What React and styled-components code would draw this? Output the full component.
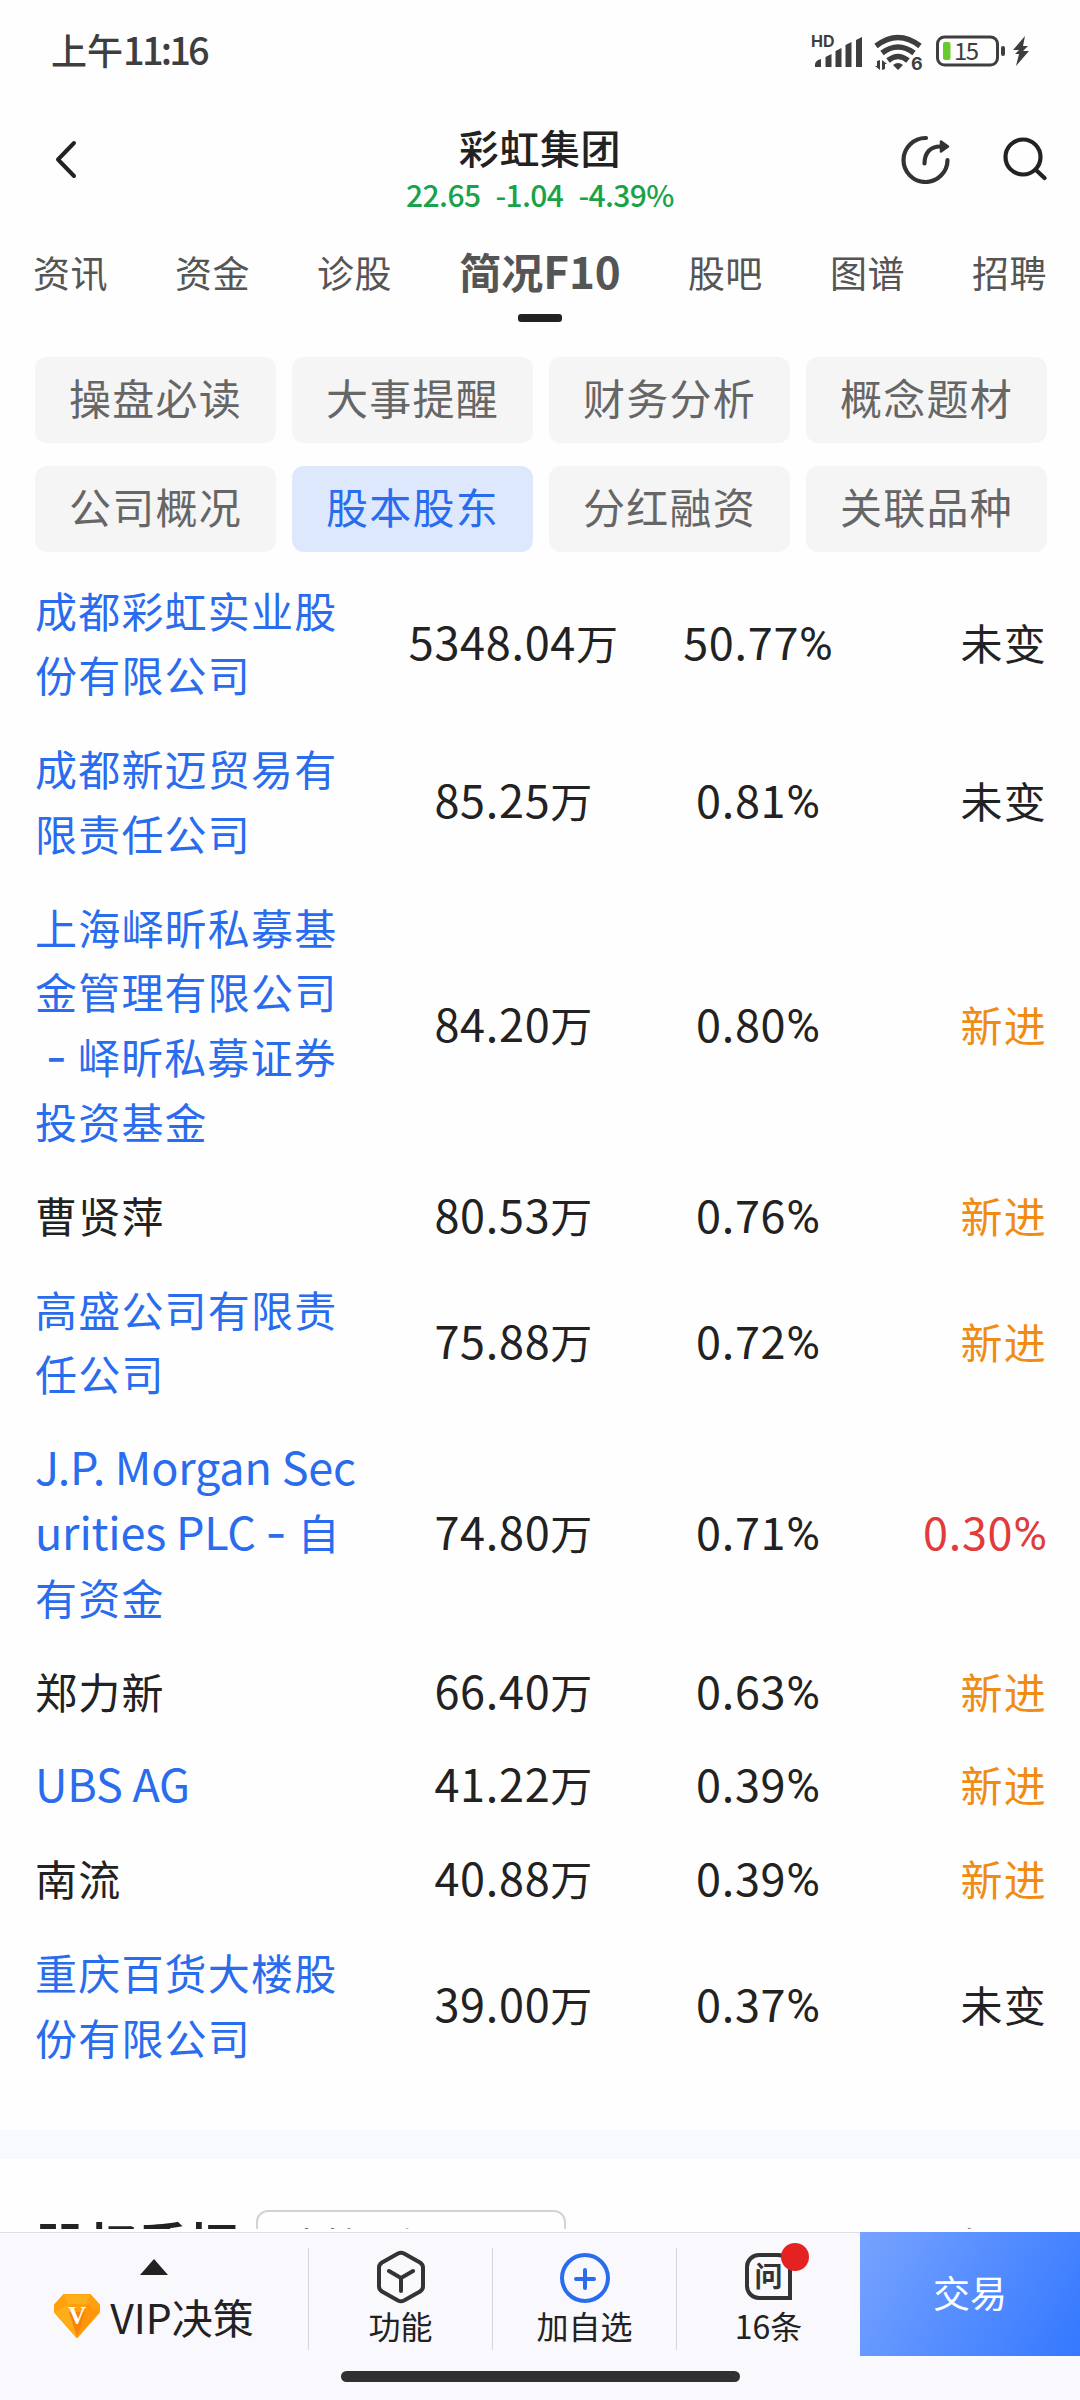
import React from "react";
import styled, { createGlobalStyle, css } from "styled-components";

const GlobalStyle = createGlobalStyle`
    * {
        box-sizing: border-box;
    }
    body {
        margin: 0;
        background: #fefefe;
        font-family: "Noto Sans CJK SC", sans-serif;
        color: #222222;
    }
`;

const Page = styled.div`
    width: 1080px;
    height: 2400px;
    display: flex;
    flex-direction: column;
    overflow: hidden;
    background: #fefefe;
`;

const StatusBar = styled.div`
    height: 104px;
    flex: none;
    display: flex;
    align-items: flex-start;
    justify-content: space-between;
    padding: 24px 48px 0 51px;
    color: #3e3e3e;
`;

const Clock = styled.div`
    font-size: 36px;
    font-weight: 500;
    line-height: 50px;

    span {
        font-size: 38px;
        line-height: 1;
        letter-spacing: -2.8px;
    }
`;

const StatusIcons = styled.svg`
    width: 222px;
    height: 50px;
    display: block;
    margin-top: 2px;
`;

const Header = styled.header`
    height: 120px;
    flex: none;
    display: flex;
    align-items: flex-start;
    justify-content: space-between;
    padding: 22px 33px 0 52px;
`;

const HeaderSide = styled.div`
    width: ${(props) => (props.$right ? 150 : 131)}px;
    display: flex;
    gap: 51px;
    justify-content: ${(props) => (props.$right ? "flex-end" : "flex-start")};

    svg {
        display: block;
        flex: none;
        margin-top: 8px;
    }
`;

const Title = styled.div`
    text-align: center;
    font-size: 40px;
    font-weight: 500;
    line-height: 42px;
    letter-spacing: 0.6px;
`;

const Quote = styled.div`
    display: flex;
    gap: 15px;
    margin-top: 8px;
    font-size: 30px;
    font-weight: 500;
    line-height: 36px;
    letter-spacing: -0.6px;
    color: #19a348;
`;

const Tabs = styled.nav`
    height: 133px;
    flex: none;
    display: flex;
    justify-content: space-between;
    padding: 18px 33px 0;
`;

const Tab = styled.div`
    display: flex;
    flex-direction: column;
    align-items: center;
    font-size: 37px;
    line-height: 60px;
    letter-spacing: 0.5px;
    color: #555555;

    ${(props) =>
        props.$active &&
        css`
            font-size: 42px;
            font-weight: 700;
            line-height: 58px;
            letter-spacing: 0;

            span {
                font-size: 44px;
                line-height: 1;
            }

            &::after {
                content: "";
                width: 44px;
                height: 8px;
                margin-top: 14px;
                border-radius: 3px;
                background: #222222;
            }
        `}
`;

const ChipGrid = styled.div`
    flex: none;
    display: grid;
    grid-template-columns: repeat(4, 1fr);
    gap: 23px 16px;
    padding: 0 33px 0 35px;
`;

const Chip = styled.div`
    height: 86px;
    border-radius: 12px;
    text-align: center;
    font-size: 42px;
    line-height: 79px;
    letter-spacing: 1.2px;
    color: ${(props) => (props.$active ? "#2a6cee" : "#666666")};
    background: ${(props) => (props.$active ? "#dde8fd" : "#f5f5f5")};
`;

const HolderList = styled.div`
    flex: none;
    height: 1578px;
    padding: 11px 34px 0 35px;
`;

const HolderRow = styled.div`
    display: flex;
    align-items: center;
    padding: 14.5px 0;
    font-size: 42px;
    line-height: 64.8px;
    letter-spacing: 1.2px;
`;

const Latin = styled.span`
    font-size: 45px;
    line-height: 1;
    letter-spacing: ${(props) => (props.$tight ? "-0.2px" : "0.7px")};
`;

const Sign = styled.span`
    font-family: ${(props) => (props.$percent ? "Roboto" : "Inter")}, sans-serif;
    font-size: 46px;
    line-height: 1;
    letter-spacing: 0;
`;

const Name = styled.div`
    width: 336px;
    white-space: pre;
    color: ${(props) => (props.$link ? "#2a6cee" : "#222222")};
`;

const Shares = styled.div`
    width: 286px;
    text-align: center;
`;

const Ratio = styled.div`
    width: 202px;
    text-align: center;
`;

const changeColors = { same: "#222222", fresh: "#f08c14", up: "#e03c3c" };

const Change = styled.div`
    flex: 1;
    text-align: right;
    margin-right: -1px;
    color: ${(props) => changeColors[props.$kind]};
`;

const Divider = styled.div`
    flex: none;
    height: 29px;
    background: #f8f9fe;
`;

const PledgeSection = styled.div`
    flex: none;
    height: 70px;
    margin-bottom: 3px;
    padding: 51px 34px 0 36px;
    display: flex;
    align-items: flex-start;
    overflow: hidden;
`;

const PledgeTitle = styled.div`
    width: 220px;
    margin-top: 3px;
    font-size: 50px;
    font-weight: 700;
    line-height: 60px;
    letter-spacing: 0.8px;
`;

const PledgeSelect = styled.div`
    width: 310px;
    height: 70px;
    border: 2px solid #d3d3d3;
    border-radius: 12px;
    padding: 6px 0 0 31px;
    font-size: 36px;
    line-height: 50px;
    color: #666666;
`;

const More = styled.div`
    margin: 8px 58px 0 auto;
    font-size: 36px;
    line-height: 50px;
    color: #888888;
`;

const BottomBar = styled.footer`
    height: 168px;
    flex: none;
    border-top: 1px solid #dedee2;
    background: #f8f8fd;
`;

const BarItems = styled.div`
    height: 124px;
    display: flex;
    align-items: flex-start;
    margin-top: -1px;
`;

const BarItem = styled.div`
    width: ${(props) => props.$width}px;
    height: 102px;
    margin-top: 16px;
    display: flex;
    flex-direction: column;
    align-items: center;
    border-right: ${(props) => (props.$last ? "none" : "1px solid #d6d6da")};

    > svg {
        display: block;
        flex: none;
        margin-top: 2px;
    }
`;

const BarLabel = styled.div`
    margin-top: 0;
    font-size: 32px;
    line-height: 42px;
`;

const UpArrow = styled.i`
    flex: none;
    margin-top: 11px;
    border: 14px solid transparent;
    border-top: none;
    border-bottom: 16px solid #222222;
`;

const Vip = styled.div`
    display: flex;
    align-items: center;
    gap: 10px;
    margin-top: 13px;
    font-size: 41px;
    line-height: 56px;
    white-space: nowrap;

    svg {
        display: block;
        flex: none;
    }
`;

const AskIcon = styled.div`
    position: relative;
    flex: none;
    width: 47px;
    height: 47px;
    margin: 5px 0 4px;
    border: 4px solid #333333;
    border-radius: 14px 14px 0 14px;
    text-align: center;
    font-size: 28px;
    font-weight: 700;
    line-height: 37px;
    color: #333333;
`;

const Dot = styled.i`
    position: absolute;
    top: -14px;
    right: -21px;
    width: 28px;
    height: 28px;
    border-radius: 50%;
    background: #e42222;
`;

const Trade = styled.div`
    flex: 1;
    height: 124px;
    text-align: center;
    font-size: 37px;
    line-height: 120px;
    color: #ffffff;
    background: linear-gradient(120deg, #77a3ff 0%, #3478ff 100%);
`;

const HomeBar = styled.div`
    width: 399px;
    height: 11px;
    margin: 15px auto 0;
    border-radius: 5.5px;
    background: #303030;
`;

const tabs = ["资讯", "资金", "诊股", "简况", "股吧", "图谱", "招聘"];

const chips = ["操盘必读", "大事提醒", "财务分析", "概念题材", "公司概况", "股本股东", "分红融资", "关联品种"];

const holders = [
    { name: ["成都彩虹实业股", "份有限公司"], link: true, shares: "5348.04", ratio: "50.77%", change: "未变", kind: "same" },
    { name: ["成都新迈贸易有", "限责任公司"], link: true, shares: "85.25", ratio: "0.81%", change: "未变", kind: "same" },
    { name: ["上海峄昕私募基", "金管理有限公司", " - 峄昕私募证券", "投资基金"], link: true, shares: "84.20", ratio: "0.80%", change: "新进", kind: "fresh" },
    { name: ["曹贤萍"], shares: "80.53", ratio: "0.76%", change: "新进", kind: "fresh" },
    { name: ["高盛公司有限责", "任公司"], link: true, shares: "75.88", ratio: "0.72%", change: "新进", kind: "fresh" },
    { name: ["J.P. Morgan Sec", "urities PLC - 自", "有资金"], link: true, shares: "74.80", ratio: "0.71%", change: "0.30%", kind: "up" },
    { name: ["郑力新"], shares: "66.40", ratio: "0.63%", change: "新进", kind: "fresh" },
    { name: ["UBS AG"], link: true, shares: "41.22", ratio: "0.39%", change: "新进", kind: "fresh" },
    { name: ["南流"], shares: "40.88", ratio: "0.39%", change: "新进", kind: "fresh" },
    { name: ["重庆百货大楼股", "份有限公司"], link: true, shares: "39.00", ratio: "0.37%", change: "未变", kind: "same" },
];

// 拉丁字母和数字比汉字稍大
const Mixed = ({ text }) =>
    text.split(/([%-]|[\w. ]+)/).map((part, i) => {
        if (i % 2 === 0) return part;
        if (part === "%" || part === "-") {
            return (
                <Sign key={i} $percent={part === "%"}>
                    {part}
                </Sign>
            );
        }
        return (
            <Latin key={i} $tight={/[a-z]/i.test(part)}>
                {part}
            </Latin>
        );
    });

const App = () => {
    return (
        <>
            <GlobalStyle />
            <Page>
                <StatusBar>
                    <Clock>
                        上午<span>11:16</span>
                    </Clock>
                    <StatusIcons viewBox="810 27 222 50" fill="#3e3e3e">
                        <text x="811" y="48" fontSize="16" fontWeight="700" fontFamily="Inter, sans-serif">
                            HD
                        </text>
                        <path d="M815 68v-3q1-4 6-5v8zM825.500 68V58l6-3v13zM835.500 68V52l6-3v19zM845.500 68V46l6-3v25zM856 68V41l6-3v30z" />
                        <g fill="none" stroke="#3e3e3e" strokeWidth="5.500">
                            <path d="M876 47q22-17 44 0M882 54q16-12 32 0M888 61.500q10-8 20 0" />
                        </g>
                        <path d="M893 66q5-4 10 0l-5 5zM880 61v10l-5-4h2v-5zM882 71V61l5 4h-2v5z" />
                        <text x="911" y="71" fontSize="18" fontWeight="700" fontFamily="Inter, sans-serif">
                            6
                        </text>
                        <rect x="937.500" y="38" width="60" height="28" rx="7" fill="none" stroke="#3e3e3e" strokeWidth="3" />
                        <rect x="943" y="43" width="7.500" height="18" rx="2" fill="#67cb2e" />
                        <text x="954" y="61" fontSize="24" letterSpacing="-1.500" fontFamily='"Noto Sans CJK SC", sans-serif'>
                            15
                        </text>
                        <rect x="1001" y="47" width="4" height="10" rx="2" />
                        <path d="M1025 37l-12 14h6l-4 4h4l-3 12 13-15h-6l5-5h-5z" />
                    </StatusIcons>
                </StatusBar>

                <Header>
                    <HeaderSide>
                        <svg width="30" height="50" viewBox="0 0 30 50" fill="none" stroke="#222222" strokeWidth="4" strokeLinecap="round" strokeLinejoin="round">
                            <path d="M22 9L6 25.500 22 42" />
                        </svg>
                    </HeaderSide>
                    <div>
                        <Title>彩虹集团</Title>
                        <Quote>
                            <span>22.65</span>
                            <span>-1.04</span>
                            <span>-4.39%</span>
                        </Quote>
                    </div>
                    <HeaderSide $right>
                        <svg width="50" height="50" viewBox="0 0 50 50" fill="none" stroke="#333333" strokeWidth="4.200" strokeLinecap="round">
                            <path d="M26 4A22 22 0 1 0 47.500 26" />
                            <path d="M24.500 29.500C24.500 18 31 12.500 40 12.500" />
                            <path d="M41 7.500l7 5-7 5z" fill="#333333" strokeWidth="2.500" strokeLinejoin="round" />
                        </svg>
                        <svg width="46" height="50" viewBox="0 0 46 50" fill="none" stroke="#222222" strokeWidth="4.200" strokeLinecap="round">
                            <circle cx="22" cy="23" r="17.500" />
                            <path d="M35 36l8.500 8" />
                        </svg>
                    </HeaderSide>
                </Header>

                <Tabs>
                    {tabs.map((tab) => (
                        <Tab key={tab} $active={tab === "简况"}>
                            {tab === "简况" ? (
                                <div>
                                    简况<span>F10</span>
                                </div>
                            ) : (
                                tab
                            )}
                        </Tab>
                    ))}
                </Tabs>

                <ChipGrid>
                    {chips.map((chip) => (
                        <Chip key={chip} $active={chip === "股本股东"}>
                            {chip}
                        </Chip>
                    ))}
                </ChipGrid>

                <HolderList>
                    {holders.map((holder) => (
                        <HolderRow key={holder.name[0]}>
                            <Name $link={holder.link}>
                                {holder.name.map((line) => (
                                    <div key={line}>
                                        <Mixed text={line} />
                                    </div>
                                ))}
                            </Name>
                            <Shares>
                                <Mixed text={holder.shares + "万"} />
                            </Shares>
                            <Ratio>
                                <Mixed text={holder.ratio} />
                            </Ratio>
                            <Change $kind={holder.kind}>
                                <Mixed text={holder.change} />
                            </Change>
                        </HolderRow>
                    ))}
                </HolderList>

                <Divider />

                <PledgeSection>
                    <PledgeTitle>股权质押</PledgeTitle>
                    <PledgeSelect>占持股份</PledgeSelect>
                    <More>更多</More>
                </PledgeSection>

                <BottomBar>
                    <BarItems>
                        <BarItem $width={309}>
                            <UpArrow />
                            <Vip>
                                <svg width="46" height="44" viewBox="0 0 46 44">
                                    <path d="M10 1h26l9 10v7L23 43 1 18v-7z" fill="#ffa00c" stroke="#ffa00c" strokeWidth="2" strokeLinejoin="round" />
                                    <path d="M10 1h26l-4 9H14z" fill="#fbb01c" />
                                    <path d="M14 10L1 18l22 25z" fill="#ffae1a" />
                                    <path d="M32 10l13 8-22 25z" fill="#ff960a" />
                                    <path d="M15 18h16l-8 25z" fill="#f98308" />
                                    <text x="23" y="30" textAnchor="middle" fontSize="25" fontWeight="700" fill="#ffffff" fontFamily='"Liberation Serif", serif'>
                                        V
                                    </text>
                                </svg>
                                VIP决策
                            </Vip>
                        </BarItem>
                        <BarItem $width={184}>
                            <svg width="50" height="54" viewBox="0 0 50 54" fill="none" stroke="#333333" strokeWidth="4" strokeLinecap="round" strokeLinejoin="round">
                                <path d="M22 3.500q3-1.500 6 0l16 9q3 2 3 5v19q0 3-3 5l-16 9q-3 1.500-6 0l-16-9q-3-2-3-5v-19q0-3 3-5z" />
                                <path d="M13 21l12 7 12-7M25 28v13" />
                            </svg>
                            <BarLabel>功能</BarLabel>
                        </BarItem>
                        <BarItem $width={184}>
                            <svg width="50" height="54" viewBox="0 0 50 54" fill="none" stroke="#2a6cee" strokeWidth="4" strokeLinecap="round">
                                <circle cx="25" cy="28" r="23" />
                                <path d="M16 29h18M25 20v18" />
                            </svg>
                            <BarLabel>加自选</BarLabel>
                        </BarItem>
                        <BarItem $width={183} $last>
                            <AskIcon>
                                问
                                <Dot />
                            </AskIcon>
                            <BarLabel>16条</BarLabel>
                        </BarItem>
                        <Trade>交易</Trade>
                    </BarItems>
                    <HomeBar />
                </BottomBar>
            </Page>
        </>
    );
};

export default App;
